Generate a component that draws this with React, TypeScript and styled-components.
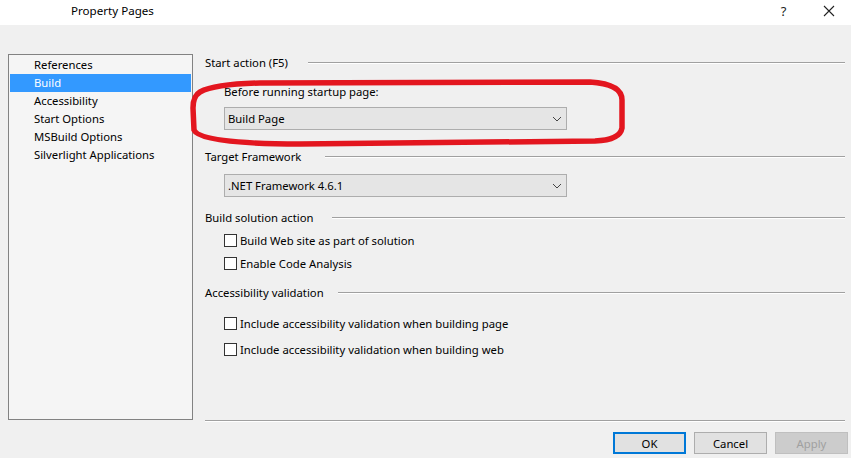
import React from "react";
import styled, { createGlobalStyle } from "styled-components";

const GlobalStyle = createGlobalStyle`
  html, body {
    margin: 0;
    padding: 0;
    background: #f0f0f0;
  }
  body {
    font-family: "Noto Sans", "Liberation Sans", sans-serif;
    font-size: 11.3px;
    color: #000;
  }
`;

const Window = styled.div`
  width: 851px;
  height: 458px;
  display: flex;
  flex-direction: column;
  position: relative;
  overflow: hidden;
  background: #f0f0f0;
`;

const TitleBar = styled.div`
  height: 25px;
  background: #fff;
  display: flex;
  align-items: center;
  padding: 0 0 4px 71px;
  box-sizing: border-box;
`;

const Title = styled.div`
  flex: 1;
  font-size: 11.6px;
`;

const TitleButton = styled.div`
  width: 45px;
  display: flex;
  justify-content: center;
  font-size: 13px;
  color: #222;
`;

const Body = styled.div`
  display: flex;
  gap: 12px;
  padding: 29px 0 0 8px;
`;

const List = styled.div`
  width: 185px;
  height: 366px;
  box-sizing: border-box;
  border: 1px solid #828282;
  background: #f5f5f5;
  padding: 1px;
  display: flex;
  flex-direction: column;
`;

const ListItem = styled.div<{ selected?: boolean }>`
  height: 18px;
  line-height: 18px;
  padding-left: 24px;
  background: ${({ selected }) => (selected ? "#3399ff" : "transparent")};
  color: ${({ selected }) => (selected ? "#fff" : "#000")};
`;

const RightColumn = styled.div`
  width: 643px;
  display: flex;
  flex-direction: column;
`;

const Content = styled.div`
  width: 640px;
  height: 367px;
  box-sizing: border-box;
  border-bottom: 1px solid #a0a0a0;
  box-shadow: 0 1px 0 #fff;
  display: flex;
  flex-direction: column;
`;

const Heading = styled.div<{ top: number; gap?: number }>`
  display: flex;
  align-items: center;
  height: 16px;
  margin-top: ${({ top }) => top}px;
  gap: ${({ gap = 20 }) => gap}px;
  &::after {
    content: "";
    flex: 1;
    height: 1px;
    background: #a0a0a0;
    box-shadow: 0 1px 0 #fff;
  }
`;

const Label = styled.div<{ top: number }>`
  height: 16px;
  line-height: 16px;
  margin: ${({ top }) => top}px 0 0 19px;
`;

const Select = styled.div<{ top: number }>`
  width: 343px;
  height: 23px;
  box-sizing: border-box;
  margin: ${({ top }) => top}px 0 0 19px;
  border: 1px solid #adadad;
  background: #e5e5e5;
  display: flex;
  align-items: center;
  padding: 0 4px 0 3px;
  justify-content: space-between;
`;

const CheckRow = styled.label<{ top: number }>`
  display: flex;
  align-items: center;
  gap: 3px;
  height: 16px;
  margin: ${({ top }) => top}px 0 0 19px;
`;

const Box = styled.span`
  width: 13px;
  height: 13px;
  box-sizing: border-box;
  border: 1px solid #333;
  background: #fff;
`;

const Footer = styled.div`
  display: flex;
  justify-content: flex-end;
  gap: 8px;
  padding-top: 11px;
`;

const Button = styled.div<{ primary?: boolean; disabled?: boolean }>`
  width: 73px;
  height: 22px;
  box-sizing: border-box;
  display: flex;
  align-items: center;
  justify-content: center;
  background: ${({ disabled }) => (disabled ? "#cccccc" : "#e1e1e1")};
  color: ${({ disabled }) => (disabled ? "#a0a0a0" : "#000")};
  border: ${({ primary, disabled }) =>
    primary ? "2px solid #0078d7" : disabled ? "1px solid #bfbfbf" : "1px solid #adadad"};
`;

const Highlight = styled.svg`
  position: absolute;
  left: 0;
  top: 0;
  pointer-events: none;
`;

const Chevron = () => (
  <svg width="10" height="6" viewBox="0 0 10 6">
    <path d="M1 1 L5 5 L9 1" fill="none" stroke="#444" strokeWidth="1" />
  </svg>
);

const CloseIcon = () => (
  <svg width="12" height="12" viewBox="0 0 12 12">
    <path d="M1 1 L11 11 M11 1 L1 11" stroke="#222" strokeWidth="1.1" fill="none" />
  </svg>
);

export default function App() {
  const items = [
    "References",
    "Build",
    "Accessibility",
    "Start Options",
    "MSBuild Options",
    "Silverlight Applications",
  ];
  return (
    <Window>
      <GlobalStyle />
      <TitleBar>
        <Title>Property Pages</Title>
        <TitleButton>?</TitleButton>
        <TitleButton>
          <CloseIcon />
        </TitleButton>
      </TitleBar>
      <Body>
        <List>
          {items.map((it) => (
            <ListItem key={it} selected={it === "Build"}>
              {it}
            </ListItem>
          ))}
        </List>
        <RightColumn>
          <Content>
            <Heading top={0}>Start action (F5)</Heading>
            <Label top={14}>Before running startup page:</Label>
            <Select top={7}>
              Build Page
              <Chevron />
            </Select>
            <Heading top={18} gap={24}>Target Framework</Heading>
            <Select top={10}>
              .NET Framework 4.6.1
              <Chevron />
            </Select>
            <Heading top={12} gap={18}>Build solution action</Heading>
            <CheckRow top={7}>
              <Box />
              Build Web site as part of solution
            </CheckRow>
            <CheckRow top={7}>
              <Box />
              Enable Code Analysis
            </CheckRow>
            <Heading top={13} gap={14}>Accessibility validation</Heading>
            <CheckRow top={15}>
              <Box />
              Include accessibility validation when building page
            </CheckRow>
            <CheckRow top={10}>
              <Box />
              Include accessibility validation when building web
            </CheckRow>
          </Content>
          <Footer>
            <Button primary>OK</Button>
            <Button>Cancel</Button>
            <Button disabled>Apply</Button>
          </Footer>
        </RightColumn>
      </Body>
      <Highlight width="851" height="458">
        <path
          d="M200 92 Q215 84 260 83 L590 82 Q622 84 622 100 L622 128 Q620 140 595 141 L300 144 Q200 144 194 130 L193 108 Q193 96 200 92 Z"
          fill="none"
          stroke="#e3161f"
          strokeWidth="5.5"
        />
      </Highlight>
    </Window>
  );
}
